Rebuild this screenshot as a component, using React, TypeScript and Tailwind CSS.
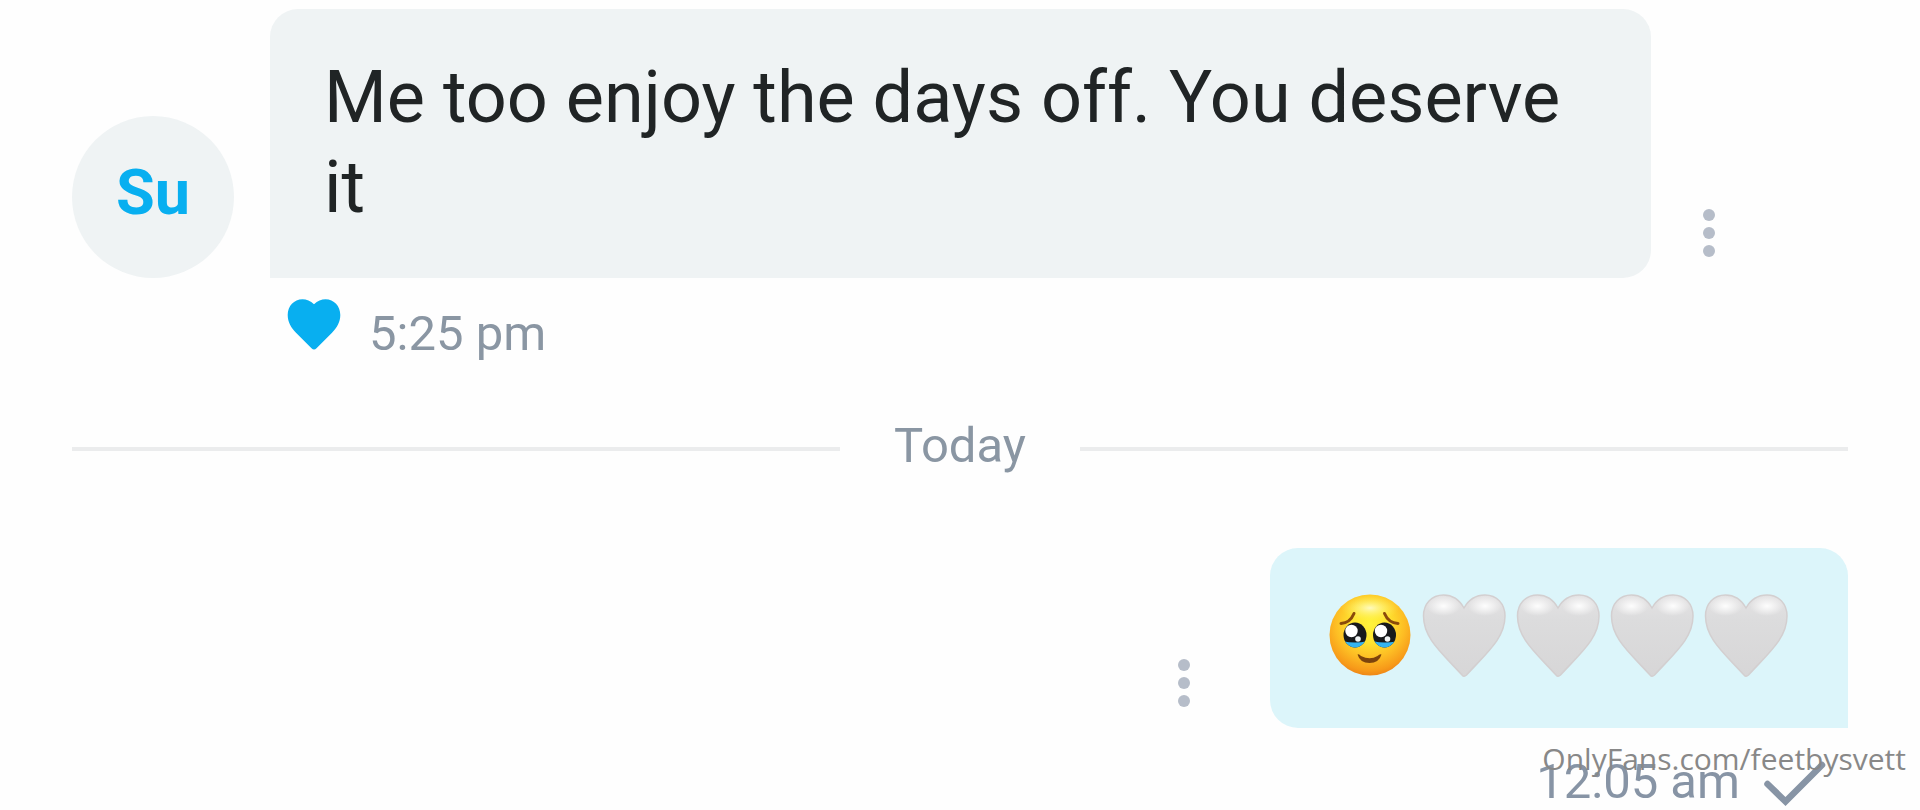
import type { ReactNode } from 'react'

function MoreButton() {
  return (
    <button
      type="button"
      aria-label="Message options"
      className="flex w-[116px] shrink-0 flex-col items-center gap-1.5 pb-[21px]"
    >
      <span className="size-3 rounded-full bg-[#b6bdc9]" />
      <span className="size-3 rounded-full bg-[#b6bdc9]" />
      <span className="size-3 rounded-full bg-[#b6bdc9]" />
    </button>
  )
}

function LikeIcon() {
  return (
    <svg viewBox="0 0 54 54" className="size-[54px]" aria-hidden>
      <path
        d="M27 6.200C23.500 3 19.500 1.200 15.500 1.200C7 1.200 0.700 8 0.700 17C0.700 24 4 29.500 9 34.800L24.500 50.300Q27 52.700 29.500 50.300L45 34.800C50 29.500 53.300 24 53.300 17C53.300 8 47 1.200 38.500 1.200C34.500 1.200 30.500 3 27 6.200Z"
        fill="#08aff0"
      />
    </svg>
  )
}

function SentIcon() {
  return (
    <svg viewBox="0 0 62 46" className="h-[46px] w-[62px]" fill="none" aria-hidden>
      <path d="M3.500 23L21.500 40.500L58 4" stroke="#8794a5" strokeWidth="6.500" strokeLinecap="round" />
    </svg>
  )
}

function HoldingTearsEmoji() {
  return (
    <svg viewBox="0 0 94 94" className="size-[94px]" role="img" aria-label="🥹">
      <defs>
        <radialGradient id="face" cx="0.5" cy="0.36" r="0.66">
          <stop offset="0" stopColor="#fff33c" />
          <stop offset="0.35" stopColor="#ffe32f" />
          <stop offset="0.65" stopColor="#fdbd24" />
          <stop offset="0.88" stopColor="#f79a19" />
          <stop offset="1" stopColor="#ec8016" />
        </radialGradient>
        <radialGradient id="shine">
          <stop offset="0" stopColor="#fffccf" stopOpacity="0.9" />
          <stop offset="1" stopColor="#fff45a" stopOpacity="0" />
        </radialGradient>
        <clipPath id="leftEye">
          <ellipse cx="31" cy="48" rx="11.500" ry="12.500" />
        </clipPath>
        <clipPath id="rightEye">
          <ellipse cx="60.500" cy="48" rx="11.500" ry="12.500" />
        </clipPath>
      </defs>
      <circle cx="46" cy="48" r="40.500" fill="url(#face)" />
      <ellipse cx="46" cy="21" rx="29" ry="13" fill="url(#shine)" />
      <g clipPath="url(#leftEye)">
        <rect x="18" y="34" width="26" height="28" fill="#17191c" />
        <path d="M18 54Q31 57 44 54V62H18Z" fill="#35b4f0" />
      </g>
      <g clipPath="url(#rightEye)">
        <rect x="48" y="34" width="26" height="28" fill="#17191c" />
        <path d="M48 54Q61 57 74 54V62H48Z" fill="#35b4f0" />
      </g>
      <circle cx="27.500" cy="44" r="6.200" fill="#fff" />
      <circle cx="57" cy="44" r="6.200" fill="#fff" />
      <circle cx="34" cy="52" r="2.800" fill="#f1f5f5" />
      <circle cx="63.500" cy="52" r="2.800" fill="#f1f5f5" />
      <path d="M17 36.500Q26 36 30 26.500" stroke="#8a4b0b" strokeWidth="3" strokeLinecap="round" fill="none" />
      <path d="M74 36.500Q64.500 36 60.500 26.500" stroke="#8a4b0b" strokeWidth="3" strokeLinecap="round" fill="none" />
      <path d="M33.500 67.500Q35 66.500 37 69Q46 73.500 53.500 69Q56 66.500 57.500 67.500Q55 76 45.500 76Q36 76 33.500 67.500Z" fill="#7c430c" />
    </svg>
  )
}

function WhiteHeartEmoji() {
  return (
    <svg viewBox="0 0 94 94" className="size-[94px]" role="img" aria-label="🤍">
      <defs>
        <linearGradient id="heart" x1="0" y1="0" x2="0" y2="1">
          <stop offset="0" stopColor="#e4e3e4" />
          <stop offset="0.3" stopColor="#dcdcdd" />
          <stop offset="1" stopColor="#d7d6d7" />
        </linearGradient>
        <radialGradient id="gloss">
          <stop offset="0" stopColor="#fff" stopOpacity="0.95" />
          <stop offset="1" stopColor="#fff" stopOpacity="0" />
        </radialGradient>
        <clipPath id="lobes">
          <path d="M8 8H84V44H8Z" />
        </clipPath>
      </defs>
      <path
        d="M46 21C41 12 34 8 25.500 8C13.500 8 5.500 17 5.500 29C5.500 51 23 65 44 88Q46 90.500 48.500 88C69.500 65 87 51 87 29C87 17 79 8 67 8C58.500 8 51 12 46 21Z"
        fill="url(#heart)"
        stroke="#d3cfd0"
        strokeWidth="1.500"
      />
      <g clipPath="url(#lobes)">
        <ellipse cx="25.500" cy="19" rx="17" ry="10" fill="url(#gloss)" />
        <ellipse cx="67" cy="19" rx="17" ry="10" fill="url(#gloss)" />
      </g>
    </svg>
  )
}

function DateDivider({ children }: { children: ReactNode }) {
  return (
    <div className="flex items-center gap-[54px] text-[49px] leading-[60px] text-[#8a96a3]">
      <span className="mt-1.5 h-1 flex-1 bg-[#ebeced]" />
      <h2>{children}</h2>
      <span className="mt-1.5 h-1 flex-1 bg-[#ebeced]" />
    </div>
  )
}

export default function App() {
  return (
    <main className="relative min-h-screen overflow-hidden bg-[#fefefe] px-[72px] pt-[9px] font-['Roboto',sans-serif]">
      <article>
        <div className="flex items-end pr-[81px]">
          <div className="mr-9 flex size-[162px] shrink-0 items-center justify-center rounded-full bg-[#eff3f4] pb-2 text-[63px] font-bold text-[#08aff0]">
            Su
          </div>
          <p className="flex-1 rounded-[28px] rounded-bl-none bg-[#eff3f4] px-[54px] pt-11 pb-[45px] text-[72px] leading-[90px] text-[#202425]">
            Me too enjoy the days off. You deserve it
          </p>
          <MoreButton />
        </div>
        <div className="ml-[215px] flex items-start gap-7 pt-5 text-[49px] leading-[60px] text-[#8a96a3]">
          <LikeIcon />
          <time className="pt-1.5">5:25 pm</time>
        </div>
      </article>

      <section className="pt-[52px]">
        <DateDivider>Today</DateDivider>
        <article className="flex flex-col items-end pt-[72px]">
          <div className="flex items-end gap-7">
            <MoreButton />
            <p className="flex rounded-[28px] rounded-br-none bg-[#dcf5fa] px-[54px] pt-[39px] pb-[47px]">
              <HoldingTearsEmoji />
              <WhiteHeartEmoji />
              <WhiteHeartEmoji />
              <WhiteHeartEmoji />
              <WhiteHeartEmoji />
            </p>
          </div>
          <div className="flex items-end gap-6 pt-[29px] pr-[22px] text-[49px] leading-[50px] text-[#8794a5]">
            <time>12:05 am</time>
            <SentIcon />
          </div>
        </article>
      </section>

      <span className="absolute right-3.5 bottom-[31px] font-['Open_Sans',sans-serif] text-[30px] leading-10 text-[#888888]">
        OnlyFans.com/feetbysvett
      </span>
    </main>
  )
}
